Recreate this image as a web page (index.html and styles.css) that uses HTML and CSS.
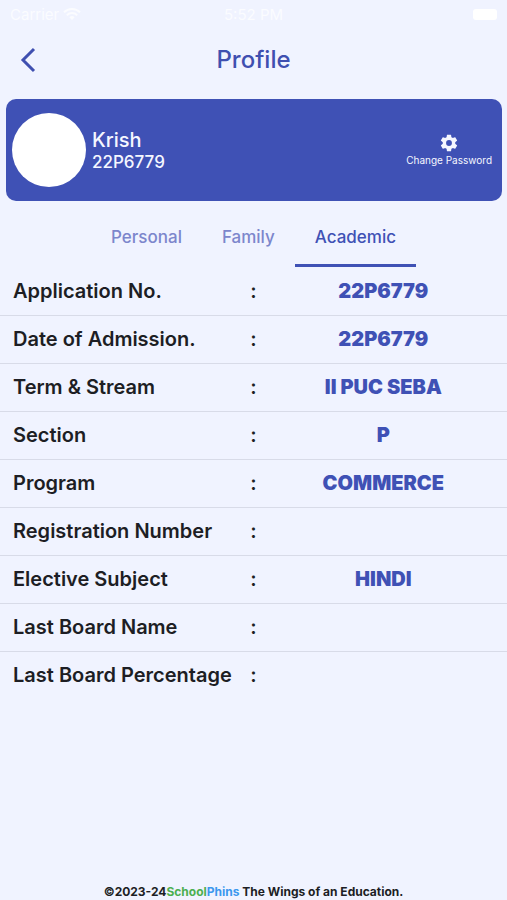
FILE: index.html
```html
<!doctype html>
<html lang="en">
<head>
  <meta charset="utf-8">
  <meta name="viewport" content="width=device-width, initial-scale=1">
  <title>Profile</title>
  <link rel="stylesheet" href="styles.css">
</head>
<body>
<div class="status">
  <div class="status_carrier">
    <span>Carrier</span>
    <svg width="18" height="14" viewBox="0 0 18 14" fill="none" stroke="currentColor" stroke-width="2">
      <path d="M1 5.2a11.5 11.5 0 0 1 16 0M3.8 8.2a7.5 7.5 0 0 1 10.4 0"/>
      <path d="M9 13l-2.6-2.8a3.8 3.8 0 0 1 5.2 0z" fill="currentColor" stroke="none"/>
    </svg>
  </div>
  <span>5:52 PM</span>
  <div class="status_power"><span class="battery"></span></div>
</div>

<header class="header">
  <button class="back" type="button" aria-label="Back">
    <svg width="16" height="26" viewBox="0 0 16 26" fill="none" stroke="currentColor" stroke-width="3">
      <path d="M14 2L3 13l11 11"/>
    </svg>
  </button>
  <h1>Profile</h1>
</header>

<section class="card">
  <div class="card_photo"></div>
  <div class="card_info">
    <div class="card_name">Krish</div>
    <div class="card_id">22P6779</div>
  </div>
  <button class="card_password" type="button">
    <svg width="20" height="20" viewBox="0 0 24 24" fill="currentColor">
      <path d="M19.43 12.98c.04-.32.07-.64.07-.98s-.03-.66-.07-.98l2.11-1.65c.19-.15.24-.42.12-.64l-2-3.46c-.12-.22-.39-.3-.61-.22l-2.49 1c-.52-.4-1.08-.73-1.69-.98l-.38-2.65A.49.49 0 0 0 14 2h-4c-.25 0-.46.18-.49.42l-.38 2.65c-.61.25-1.17.59-1.69.98l-2.49-1c-.23-.09-.49 0-.61.22l-2 3.46c-.13.22-.07.49.12.64l2.11 1.65c-.04.32-.07.65-.07.98s.03.66.07.98l-2.11 1.65c-.19.15-.24.42-.12.64l2 3.46c.12.22.39.3.61.22l2.49-1c.52.4 1.08.73 1.69.98l.38 2.65c.03.24.24.42.49.42h4c.25 0 .46-.18.49-.42l.38-2.65c.61-.25 1.17-.59 1.69-.98l2.49 1c.23.09.49 0 .61-.22l2-3.46c.12-.22.07-.49-.12-.64l-2.11-1.65zM12 15.5a3.5 3.5 0 1 1 0-7 3.5 3.5 0 0 1 0 7z"/>
    </svg>
    <span>Change Password</span>
  </button>
</section>

<nav class="tabs">
  <button type="button">Personal</button>
  <button type="button">Family</button>
  <button type="button" class="active">Academic</button>
</nav>

<table class="details">
  <tr><th scope="row">Application No.</th><td class="colon">:</td><td>22P6779</td></tr>
  <tr><th scope="row">Date of Admission.</th><td class="colon">:</td><td>22P6779</td></tr>
  <tr><th scope="row">Term &amp; Stream</th><td class="colon">:</td><td>II PUC SEBA</td></tr>
  <tr><th scope="row">Section</th><td class="colon">:</td><td>P</td></tr>
  <tr><th scope="row">Program</th><td class="colon">:</td><td>COMMERCE</td></tr>
  <tr><th scope="row">Registration Number</th><td class="colon">:</td><td></td></tr>
  <tr><th scope="row">Elective Subject</th><td class="colon">:</td><td>HINDI</td></tr>
  <tr><th scope="row">Last Board Name</th><td class="colon">:</td><td></td></tr>
  <tr><th scope="row">Last Board Percentage</th><td class="colon">:</td><td></td></tr>
</table>

<footer class="footer">©2023-24<span class="green">School</span><span class="blue">Phins</span> The Wings of an Education.</footer>
</body>
</html>
```
FILE: styles.css
```css
* {
  box-sizing: border-box;
}
body {
  display: flex;
  flex-direction: column;
  min-height: 100vh;
  margin: 0;
  background: #f0f3ff;
  color: #1d1e24;
  font-family: Inter, "Liberation Sans", sans-serif;
}
button {
  padding: 0;
  border: 0;
  background: none;
  color: inherit;
  font: inherit;
  cursor: pointer;
}
svg {
  display: block;
}

.status {
  display: grid;
  grid-template-columns: 1fr auto 1fr;
  align-items: center;
  height: 28px;
  padding: 0 10px;
  color: #fbfcff;
  font-size: 15px;
}
.status_carrier {
  display: flex;
  align-items: center;
  gap: 4px;
}
.status_power {
  display: flex;
  justify-content: flex-end;
}
.battery {
  width: 24px;
  height: 11px;
  border-radius: 3px;
  background: #fff;
}

.header {
  display: grid;
  grid-template-columns: 48px 1fr 48px;
  align-items: center;
  height: 63px;
  color: #3f4fb0;
}
.back {
  display: flex;
  justify-content: center;
  padding-left: 8px;
}
.header h1 {
  margin: 0;
  font-size: 24px;
  font-weight: 500;
  text-align: center;
}

.card {
  display: flex;
  align-items: center;
  gap: 6px;
  margin: 8px 5px 0 6px;
  padding: 14px 10px 14px 6px;
  border-radius: 10px;
  background: #3f51b5;
  color: #f5f7ff;
}
.card_photo {
  width: 74px;
  height: 74px;
  border-radius: 50%;
  background: #fff;
}
.card_info {
  flex: 1;
  font-weight: 500;
}
.card_name {
  font-size: 20px;
  line-height: 24px;
}
.card_id {
  font-size: 17px;
  line-height: 20px;
}
.card_password {
  display: flex;
  flex-direction: column;
  align-items: center;
  font-size: 10px;
  line-height: 14px;
}

.tabs {
  display: flex;
  justify-content: center;
  margin-top: 8px;
}
.tabs button {
  height: 58px;
  padding: 0 20px;
  border-bottom: 3px solid transparent;
  color: #7c86cc;
  font-size: 17px;
  font-weight: 500;
}
.tabs .active {
  border-color: #3f51b5;
  color: #3f51b5;
}

.details {
  width: 100%;
  table-layout: fixed;
  border-collapse: collapse;
  font-size: 20px;
}
.details th,
.details td {
  height: 48px;
  padding: 0;
  border-bottom: 1px solid #d8dbe8;
}
.details tr:last-child > * {
  border-bottom: 0;
}
.details th {
  width: 48%;
  padding-left: 13px;
  font-weight: 600;
  text-align: left;
}
.details td {
  color: #3f51b5;
  font-weight: 900;
  text-align: center;
}
.details .colon {
  width: 4%;
  color: #1d1e24;
  font-weight: 600;
}
.details td:last-child {
  padding-right: 12px;
  padding-left: 8px;
}

.footer {
  margin-top: auto;
  font-size: 12px;
  font-weight: 700;
  line-height: 16px;
  text-align: center;
}
.green {
  color: #4caf50;
}
.blue {
  color: #3b98ee;
}
```
